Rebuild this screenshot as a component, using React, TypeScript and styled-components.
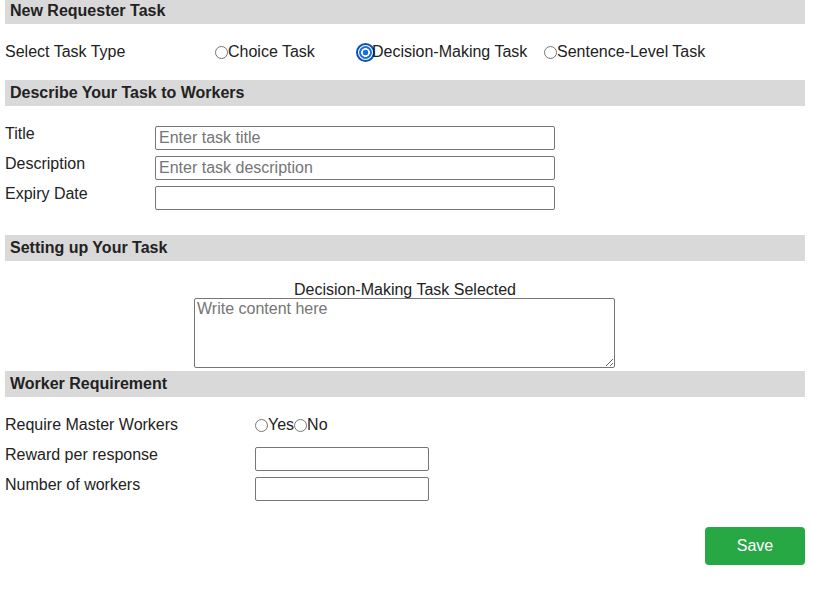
import styled, { createGlobalStyle } from 'styled-components';

const GlobalStyle = createGlobalStyle`
  body {
    margin: 0;
    background: #fff;
    font-family: "Liberation Sans", Arial, sans-serif;
    font-size: 16px;
    color: #222;
  }
`;

export default function App() {
  return (
    <>
      <GlobalStyle />
      <Page>
        <SectionTitle $flush>New Requester Task</SectionTitle>
        <Section $top={18} $bottom={18}>
          <TaskTypeRow>
            <Label>Select Task Type</Label>
            <RadioLabel>
              <Radio name="type" />
              Choice Task
            </RadioLabel>
            <RadioLabel>
              <Radio name="type" defaultChecked $focused />
              Decision-Making Task
            </RadioLabel>
            <RadioLabel>
              <Radio name="type" />
              Sentence-Level Task
            </RadioLabel>
          </TaskTypeRow>
        </Section>

        <SectionTitle>Describe Your Task to Workers</SectionTitle>
        <Section $top={18} $bottom={21}>
          <FieldRow $labelWidth={150}>
            <Label>Title</Label>
            <TextInput $width={400} placeholder="Enter task title" />
          </FieldRow>
          <FieldRow $labelWidth={150}>
            <Label>Description</Label>
            <TextInput $width={400} placeholder="Enter task description" />
          </FieldRow>
          <FieldRow $labelWidth={150}>
            <Label>Expiry Date</Label>
            <TextInput $width={400} />
          </FieldRow>
        </Section>

        <SectionTitle>Setting up Your Task</SectionTitle>
        <Section $top={20} $bottom={3}>
          <Centered>
            <Selected>Decision-Making Task Selected</Selected>
            <ContentArea placeholder="Write content here" />
          </Centered>
        </Section>

        <SectionTitle>Worker Requirement</SectionTitle>
        <Section $top={18} $bottom={0}>
          <FieldRow $labelWidth={250}>
            <Label>Require Master Workers</Label>
            <InlineRadios>
              <RadioLabel>
                <Radio name="master" />
                Yes
              </RadioLabel>
              <RadioLabel>
                <Radio name="master" />
                No
              </RadioLabel>
            </InlineRadios>
          </FieldRow>
          <FieldRow $labelWidth={250}>
            <Label>Reward per response</Label>
            <TextInput $width={174} />
          </FieldRow>
          <FieldRow $labelWidth={250}>
            <Label>Number of workers</Label>
            <TextInput $width={174} />
          </FieldRow>
          <Actions>
            <SaveButton type="button">Save</SaveButton>
          </Actions>
        </Section>
      </Page>
    </>
  );
}

const Page = styled.div`
  width: 800px;
  margin-left: 5px;
`;

const SectionTitle = styled.h3<{ $flush?: boolean }>`
  margin: 0;
  background: #d9d9d9;
  height: ${(p) => (p.$flush ? 24 : 26)}px;
  line-height: ${(p) => (p.$flush ? 21 : 25)}px;
  padding-left: 5px;
  font-size: 16px;
  font-weight: bold;
  color: #222;
`;

const Section = styled.div<{ $top: number; $bottom: number }>`
  padding-top: ${(p) => p.$top}px;
  padding-bottom: ${(p) => p.$bottom}px;
`;

const TaskTypeRow = styled.div`
  display: grid;
  grid-template-columns: 210px 144px 185px auto;
  align-items: center;
  height: 20px;
`;

const Label = styled.label`
  line-height: 18px;
  color: #222;
`;

const RadioLabel = styled.label`
  display: inline-flex;
  align-items: center;
  line-height: 18px;
  color: #222;
`;

const InlineRadios = styled.div`
  display: flex;
  align-items: center;
  height: 18px;
  padding-top: 1px;
`;

const Radio = styled.input.attrs({ type: 'radio' })<{ $focused?: boolean }>`
  appearance: none;
  box-sizing: border-box;
  flex-shrink: 0;
  margin: 0;
  width: 13px;
  height: 13px;
  border: 1px solid #767676;
  border-radius: 50%;
  background: #fff;

  &:checked {
    border: none;
    background: radial-gradient(
      circle,
      #1a6fe0 0 2.6px,
      #fff 3.1px 4.1px,
      #1a6fe0 4.6px
    );
  }

  ${(p) =>
    p.$focused &&
    `
    outline: 2px solid #0f4fb8;
    outline-offset: 1px;
  `}
`;

const FieldRow = styled.div<{ $labelWidth: number }>`
  display: flex;
  align-items: flex-start;
  height: 30px;

  & > ${Label} {
    width: ${(p) => p.$labelWidth}px;
    flex-shrink: 0;
    padding-top: 1px;
  }
`;

const TextInput = styled.input.attrs({ type: 'text' })<{ $width: number }>`
  box-sizing: border-box;
  width: ${(p) => p.$width}px;
  height: 24px;
  margin: 2px 0 0;
  padding: 0 3px;
  border: 1px solid #767676;
  border-radius: 2px;
  font-family: "Liberation Sans", Arial, sans-serif;
  font-size: 16px;
  color: #222;

  &::placeholder {
    color: #757575;
  }
`;

const Centered = styled.div`
  display: flex;
  flex-direction: column;
  align-items: center;
`;

const Selected = styled.div`
  line-height: 17px;
  color: #222;
`;

const ContentArea = styled.textarea`
  box-sizing: border-box;
  width: 421px;
  height: 70px;
  margin: 0 1px 0 0;
  padding: 1px 2px;
  border: 1px solid #767676;
  border-radius: 2px;
  font-family: "Liberation Sans", Arial, sans-serif;
  font-size: 16px;
  line-height: 18px;
  color: #222;

  &::placeholder {
    color: #757575;
  }
`;

const Actions = styled.div`
  display: flex;
  justify-content: flex-end;
  margin-top: 22px;
`;

const SaveButton = styled.button`
  width: 100px;
  height: 38px;
  border: none;
  border-radius: 4px;
  background: #28a745;
  color: #fff;
  font-family: "Liberation Sans", Arial, sans-serif;
  font-size: 16px;
  cursor: pointer;
`;
